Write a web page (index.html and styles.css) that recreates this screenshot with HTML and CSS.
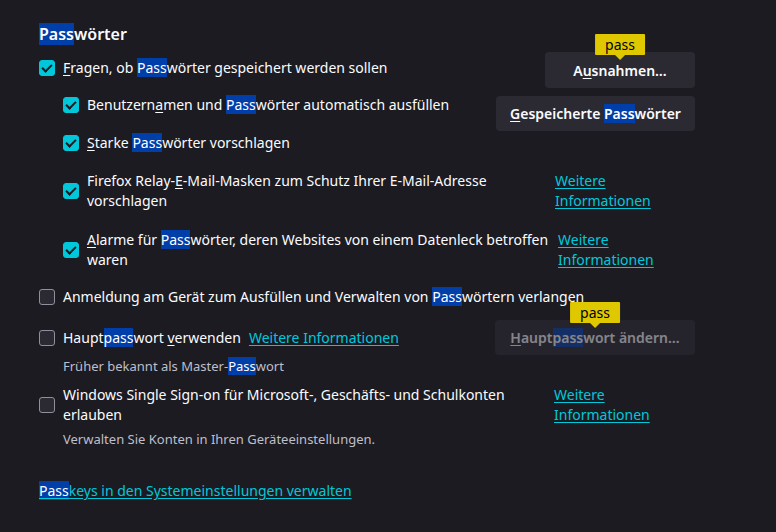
FILE: index.html
```html
<!DOCTYPE html>
<html lang="de">
<head>
<meta charset="utf-8">
<link rel="stylesheet" href="styles.css">
</head>
<body>
<main class="pane">
  <h1 class="title"><span class="hl">Pass</span>wörter</h1>

  <section class="top">
    <div class="checks">
      <label class="check">
        <span class="box on"></span>
        <span class="text"><u>F</u>ragen, ob <span class="hl">Pass</span>wörter gespeichert werden sollen</span>
      </label>
      <div class="nested">
        <label class="check">
          <span class="box on"></span>
          <span class="text">Benutzern<u>a</u>men und <span class="hl">Pass</span>wörter automatisch ausfüllen</span>
        </label>
        <label class="check">
          <span class="box on"></span>
          <span class="text"><u>S</u>tarke <span class="hl">Pass</span>wörter vorschlagen</span>
        </label>
      </div>
    </div>
    <div class="buttons">
      <button class="btn wide1 tipped"><span class="tip">pass</span>A<u>u</u>snahmen…</button>
      <button class="btn wide2"><u>G</u>espeicherte <span class="hl">Pass</span>wörter</button>
    </div>
  </section>

  <div class="nested more-rows">
    <div class="withlink relay">
      <span class="box on"></span>
      <span class="text">Firefox Relay-<u>E</u>-Mail-Masken zum Schutz Ihrer E-Mail-Adresse vorschlagen</span>
      <a class="link" href="#">Weitere Informationen</a>
    </div>
    <div class="withlink alarm">
      <span class="box on"></span>
      <span class="text"><u>A</u>larme für <span class="hl">Pass</span>wörter, deren Websites von einem Datenleck betroffen waren</span>
      <a class="link" href="#">Weitere Informationen</a>
    </div>
  </div>

  <label class="check device">
    <span class="box"></span>
    <span class="text">Anmeldung am Gerät zum Ausfüllen und Verwalten von <span class="hl">Pass</span>wörtern verlangen</span>
  </label>

  <div class="primary">
    <label class="check">
      <span class="box"></span>
      <span class="text">Haupt<span class="hl">pass</span>wort <u>v</u>erwenden</span>
      <a class="link inline" href="#">Weitere Informationen</a>
    </label>
    <button class="btn disabled tipped"><span class="tip">pass</span><span class="dim"><u>H</u>aupt<span class="hl">pass</span>wort ändern…</span></button>
  </div>
  <p class="note">Früher bekannt als Master-<span class="hl">Pass</span>wort</p>

  <div class="withlink sso">
    <span class="box"></span>
    <span class="text">Windows Single Sign-on für Microsoft-, Geschäfts- und Schulkonten erlauben</span>
    <a class="link" href="#">Weitere Informationen</a>
  </div>
  <p class="note sso-note">Verwalten Sie Konten in Ihren Geräteeinstellungen.</p>

  <a class="link footer" href="#"><span class="hl">Pass</span>keys in den Systemeinstellungen verwalten</a>
</main>
</body>
</html>
```

FILE: styles.css
```css
* { box-sizing: border-box; }
html, body {
  margin: 0;
  background: #1c1b22;
  color: #fbfbfe;
  font-family: "Noto Sans", "Open Sans", sans-serif;
  font-size: 14px;
}
.pane {
  padding: 24px 0 0 39px;
  width: 695px;
  display: flex;
  flex-direction: column;
}
.title {
  margin: 0;
  font-size: 16px;
  font-weight: 600;
  line-height: 20px;
  align-self: flex-start;
}
.hl {
  background: #003eaa;
  color: #fff;
}
u { text-decoration-thickness: 1px; text-underline-offset: 2px; }

.top {
  display: flex;
  justify-content: space-between;
  align-items: flex-start;
  margin-top: 8px;
}
.checks {
  padding-top: 6px;
  display: flex;
  flex-direction: column;
  gap: 17px;
}
.nested {
  padding-left: 24px;
  display: flex;
  flex-direction: column;
  gap: 18px;
}
.check {
  display: flex;
  align-items: flex-start;
  gap: 8px;
  line-height: 20px;
}
.box {
  flex: none;
  width: 16px;
  height: 16px;
  margin-top: 2px;
  border-radius: 3px;
  border: 1px solid #8f8f9d;
  background: #2b2a33;
  position: relative;
}
.box.on {
  border-color: #00c8da;
  background: #00c8da;
}
.box.on::after {
  content: "";
  position: absolute;
  left: 4px;
  top: 1px;
  width: 4px;
  height: 8px;
  border: solid #1c1b22;
  border-width: 0 2px 2px 0;
  transform: rotate(45deg);
}

.withlink {
  display: grid;
  column-gap: 8px;
  align-items: center;
  line-height: 20px;
}
.withlink .box { margin-top: 0; }
.withlink .link { width: min-content; align-self: start; }
.relay { grid-template-columns: 16px 460px auto; }
.alarm { grid-template-columns: 16px 463px auto; }
.sso { grid-template-columns: 16px 483px auto; margin-top: 10px; }
.more-rows { margin-top: 18px; gap: 19px; }

.link {
  color: #00c8da;
  text-decoration: underline;
  text-underline-offset: 2px;
}

.buttons {
  display: flex;
  flex-direction: column;
  align-items: flex-end;
  gap: 8px;
}
.btn {
  position: relative;
  font: inherit;
  font-size: 14px;
  font-weight: 600;
  color: #fbfbfe;
  background: #2b2a33;
  border: none;
  border-radius: 4px;
  height: 35px;
  padding: 0 8px;
  white-space: nowrap;
}
.wide1 { width: 150px; height: 36px; }
.wide2 { width: 199px; }
.btn.disabled { background: #25242c; width: 200px; }
.dim { opacity: 0.45; }
.tip {
  position: absolute;
  left: 50%;
  bottom: calc(100% - 3px);
  transform: translateX(-50%);
  background: #e0c800;
  color: #000;
  font-weight: 400;
  font-size: 14px;
  line-height: 21px;
  padding: 0 10px;
  border-radius: 1px;
}
.tip::after {
  content: "";
  position: absolute;
  left: 50%;
  top: 100%;
  margin-left: -5px;
  border: 5px solid transparent;
  border-top-color: #e0c800;
  border-bottom: 0;
}
.device { margin-top: 17px; }
.primary {
  display: flex;
  justify-content: space-between;
  align-items: center;
  margin-top: 13px;
}
.primary .check { align-items: center; }
.primary .box { margin-top: 0; }
.note {
  margin: 2px 0 0 24px;
  font-size: 13px;
  line-height: 18px;
  color: #bfbfc9;
}
.sso-note { margin-top: 5px; }
.footer {
  margin-top: 33px;
  align-self: flex-start;
  line-height: 20px;
}
```
